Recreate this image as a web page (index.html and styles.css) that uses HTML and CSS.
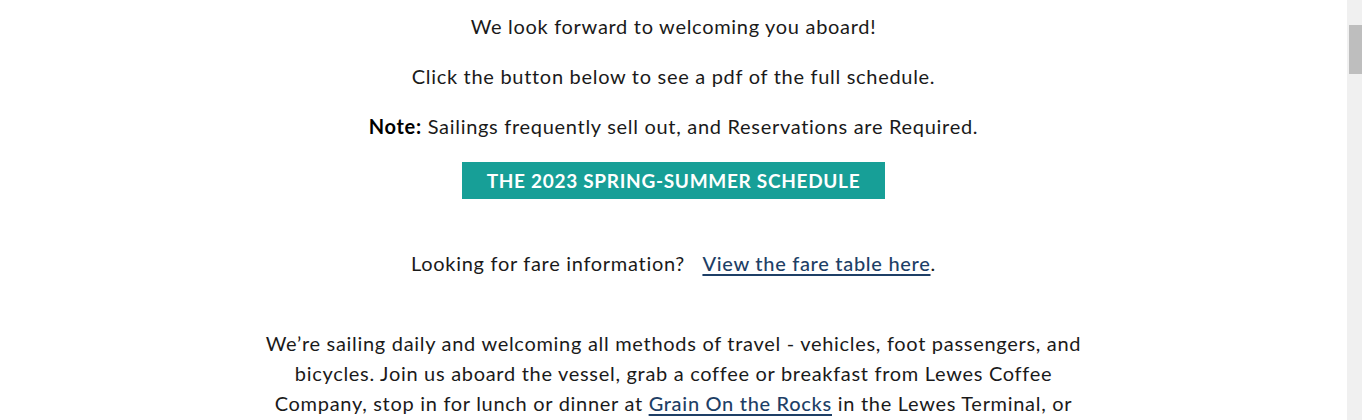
FILE: index.html
```html
<!DOCTYPE html>
<html lang="en">
<head>
<meta charset="utf-8">
<title>Schedule</title>
<link rel="stylesheet" href="styles.css">
</head>
<body>
<main class="page">
  <section class="content">
    <p>We look forward to welcoming you aboard!</p>
    <p>Click the button below to see a pdf of the full schedule.</p>
    <p><strong>Note:</strong> Sailings frequently sell out, and Reservations are Required.</p>
    <p class="btn-row"><a class="btn" href="#">THE 2023 SPRING-SUMMER SCHEDULE</a></p>
    <p class="fare">Looking for fare information? &nbsp; <a class="link" href="#">View the fare table here</a>.</p>
    <p class="intro">We’re sailing daily and welcoming all methods of travel - vehicles, foot passengers, and bicycles. Join us aboard the vessel, grab a coffee or breakfast from Lewes Coffee Company, stop in for lunch or dinner at <a class="link" href="#">Grain On the Rocks</a> in the Lewes Terminal, or relax on the deck and take in the views across the bay.</p>
  </section>
</main>
<div class="scrollbar"><div class="thumb"></div></div>
</body>
</html>
```
FILE: styles.css
```css
html, body {
  margin: 0;
  padding: 0;
  overflow: hidden;
  background: #ffffff;
}
body {
  font-family: "Lato", "Liberation Sans", sans-serif;
  color: #1a1a1a;
  font-size: 20px;
  letter-spacing: 0.7px;
  padding-right: 15px;
}
.page {
  padding-top: 11px;
}
.content {
  width: 830px;
  margin: 0 auto;
  text-align: center;
}
.content p {
  margin: 0 0 20px;
  line-height: 30px;
}
.content strong {
  font-weight: 700;
  color: #000;
}
.content .btn-row {
  margin: 21px 0 49px;
  line-height: 37px;
}
.btn {
  display: inline-block;
  background: #179f97;
  color: #ffffff;
  text-decoration: none;
  font-weight: 700;
  font-size: 19px;
  padding: 0 25px;
  height: 37px;
  line-height: 37px;
  vertical-align: top;
}
.content .fare {
  margin-bottom: 50px;
}
.link {
  color: #1e3f66;
  text-decoration: underline;
  text-decoration-thickness: 2px;
  text-underline-offset: 3px;
  font-weight: 500;
}
.scrollbar {
  position: fixed;
  top: 0;
  right: 0;
  width: 15px;
  height: 100%;
  background: #f0f0f0;
}
.thumb {
  position: absolute;
  top: 25px;
  left: 2px;
  right: 0;
  height: 49px;
  background: #bebebe;
}
```
